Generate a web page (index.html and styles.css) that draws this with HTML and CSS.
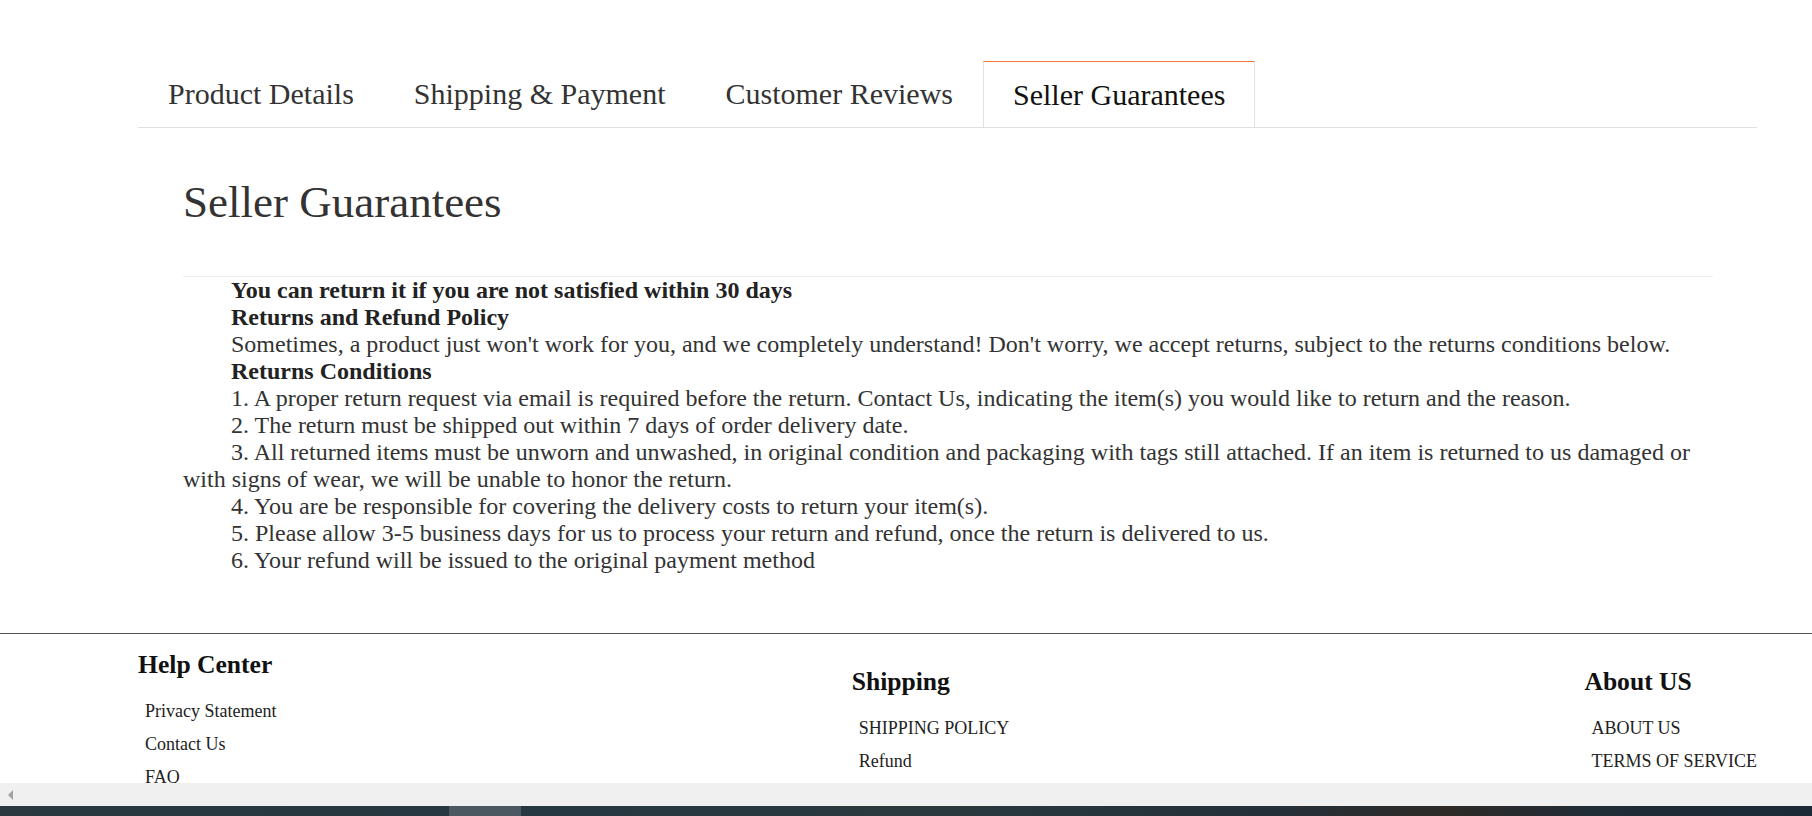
FILE: index.html
```html
<!DOCTYPE html>
<html lang="en">
<head>
<meta charset="utf-8">
<title>Seller Guarantees</title>
<link rel="stylesheet" href="styles.css">
</head>
<body>
<div class="page">
  <ul class="tabs">
    <li class="tab">Product Details</li>
    <li class="tab">Shipping &amp; Payment</li>
    <li class="tab">Customer Reviews</li>
    <li class="tab active">Seller Guarantees</li>
  </ul>
  <section class="panel">
    <h1 class="panel-title">Seller Guarantees</h1>
    <div class="panel-body">
      <p class="strong">You can return it if you are not satisfied within 30 days</p>
      <p class="strong">Returns and Refund Policy</p>
      <p>Sometimes, a product just won't work for you, and we completely understand! Don't worry, we accept returns, subject to the returns conditions below.</p>
      <p class="strong">Returns Conditions</p>
      <p>1. A proper return request via email is required before the return. Contact Us, indicating the item(s) you would like to return and the reason.</p>
      <p>2. The return must be shipped out within 7 days of order delivery date.</p>
      <p>3. All returned items must be unworn and unwashed, in original condition and packaging with tags still attached. If an item is returned to us damaged or with signs of wear, we will be unable to honor the return.</p>
      <p>4. You are be responsible for covering the delivery costs to return your item(s).</p>
      <p>5. Please allow 3-5 business days for us to process your return and refund, once the return is delivered to us.</p>
      <p>6. Your refund will be issued to the original payment method</p>
    </div>
  </section>
</div>
<footer class="footer">
  <div class="footer-inner">
    <div class="footer-col">
      <h3>Help Center</h3>
      <ul>
        <li>Privacy Statement</li>
        <li>Contact Us</li>
        <li>FAQ</li>
      </ul>
    </div>
    <div class="footer-col lower">
      <h3>Shipping</h3>
      <ul>
        <li>SHIPPING POLICY</li>
        <li>Refund</li>
      </ul>
    </div>
    <div class="footer-col lower">
      <h3>About US</h3>
      <ul>
        <li>ABOUT US</li>
        <li>TERMS OF SERVICE</li>
      </ul>
    </div>
  </div>
</footer>
<div class="hscroll"><span class="hscroll-arrow"></span></div>
<div class="dark-band"></div>
</body>
</html>
```
FILE: styles.css
```css
html, body {
  margin: 0;
  padding: 0;
  background: #fff;
}
body {
  font-family: "Liberation Serif", "Times New Roman", serif;
  color: #333;
  overflow: hidden;
}
.page {
  margin: 0 55px 0 138px;
}
.tabs {
  list-style: none;
  margin: 0;
  padding: 61px 0 0 0;
  display: flex;
  align-items: flex-end;
  border-bottom: 1px solid #e0e0e0;
}
.tab {
  height: 63px;
  padding: 0 29px 2px 29px;
  border: 1px solid transparent;
  border-bottom: 0;
  display: flex;
  align-items: center;
  font-size: 30px;
  color: #333;
  white-space: nowrap;
}
.tab.active {
  border-color: #e2e2e2;
  border-top-color: #ee7b3b;
  color: #111;
  padding-bottom: 0;
  height: 65px;
}
.panel {
  padding: 0 44px 59px 45px;
}
.panel-title {
  margin: 48px 0 0 0;
  font-size: 45px;
  line-height: 52px;
  font-weight: normal;
  color: #333;
  padding-bottom: 48px;
  border-bottom: 1px solid #eeeeee;
}
.panel-body p {
  margin: 0;
  font-size: 24px;
  line-height: 27px;
  text-indent: 48px;
  color: #333;
}
.panel-body p.strong {
  font-weight: bold;
  color: #222;
}
.footer {
  border-top: 1px solid #555;
  height: 149px;
  overflow: hidden;
}
.footer-inner {
  margin: 0 55px 0 138px;
  display: flex;
  justify-content: space-between;
  padding-top: 16px;
}
.footer-col.lower {
  padding-top: 17px;
}
.footer-col h3 {
  margin: 0 0 15px 0;
  font-size: 25.6px;
  line-height: 30px;
  font-weight: bold;
  color: #111;
}
.footer-col ul {
  list-style: none;
  margin: 0;
  padding: 0 0 0 7px;
}
.footer-col li {
  font-size: 18px;
  line-height: 33px;
  color: #222;
  white-space: nowrap;
}
.hscroll {
  height: 23px;
  background: #f0f0f0;
  display: flex;
  align-items: center;
  padding-left: 8px;
}
.hscroll-arrow {
  width: 0;
  height: 0;
  border-top: 5px solid transparent;
  border-bottom: 5px solid transparent;
  border-right: 5px solid #a3a3a3;
}
.dark-band {
  height: 10px;
  background:
    linear-gradient(to right, transparent 449px, #4b5861 449px, #4b5861 521px, transparent 521px),
    linear-gradient(to right, #29393f 0%, #263842 30%, #2a3a3e 50%, #243039 70%, #2e2a27 80%, #202c36 88%, #1c2a38 100%);
}
```
